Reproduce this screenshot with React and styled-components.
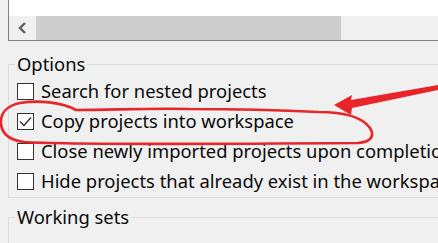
import React from "react";
import styled, { createGlobalStyle } from "styled-components";

const GlobalStyle = createGlobalStyle`
  html, body {
    margin: 0;
    padding: 0;
    background: #f0f0f0;
    overflow: hidden;
  }
`;

const Page = styled.div`
  position: relative;
  width: 438px;
  height: 243px;
  overflow: hidden;
  background: #f0f0f0;
  font-family: "Noto Sans", "Open Sans", sans-serif;
  font-size: 18.4px;
  color: #0a0a0a;
`;

const ListBox = styled.div`
  margin-left: 8px;
  width: 470px;
  height: 41px;
  padding-top: 16px;
  box-sizing: border-box;
  background: #fff;
  border-left: 1px solid #828282;
  border-bottom: 1px solid #828282;
`;

const HScroll = styled.div`
  display: flex;
  height: 24px;
  background: #f0f0f0;
`;

const ArrowButton = styled.div`
  width: 27px;
  display: flex;
  align-items: center;
  justify-content: center;
`;

const Thumb = styled.div`
  width: 305px;
  background: #cdcdcd;
`;

const Group = styled.fieldset`
  margin: ${(p) => p.$top}px 0 0 8px;
  width: 470px;
  padding: 0 8px 1px;
  border: 1px solid #dcdcdc;
  border-right: none;
  min-height: ${(p) => p.$minHeight || 0}px;
  box-sizing: border-box;
`;

const Legend = styled.legend`
  padding: 0 2px;
  margin-left: -2px;
  font-size: 18.4px;
  line-height: 24px;
  color: #0a0a0a;
`;

const Row = styled.label`
  display: flex;
  align-items: center;
  gap: 7px;
  height: 30px;
  white-space: nowrap;
  line-height: 24px;
`;

const Box = styled.span`
  flex: none;
  width: 17px;
  height: 17px;
  box-sizing: border-box;
  border: 1px solid #333;
  background: #fff;
  display: flex;
  align-items: center;
  justify-content: center;
`;

const Marks = styled.svg`
  position: absolute;
  left: 0;
  top: 0;
  pointer-events: none;
`;

const Checkbox = ({ checked, children }) => (
  <Row>
    <Box>
      {checked && (
        <svg width="15" height="15" viewBox="0 0 15 15">
          <path d="M2 7.5 L6 11.5 L13 3.5" fill="none" stroke="#333" strokeWidth="1.4" />
        </svg>
      )}
    </Box>
    <span>{children}</span>
  </Row>
);

const options = [
  { label: "Search for nested projects", checked: false },
  { label: "Copy projects into workspace", checked: true },
  { label: "Close newly imported projects upon completion", checked: false },
  { label: "Hide projects that already exist in the workspace", checked: false },
];

export default function App() {
  return (
    <Page>
      <GlobalStyle />
      <ListBox>
        <HScroll>
          <ArrowButton>
            <svg width="9" height="12" viewBox="0 0 9 12">
              <polyline points="7,1 2,6 7,11" fill="none" stroke="#606060" strokeWidth="2.4" />
            </svg>
          </ArrowButton>
          <Thumb />
        </HScroll>
      </ListBox>

      <Group $top={11}>
        <Legend>Options</Legend>
        {options.map((o) => (
          <Checkbox key={o.label} checked={o.checked}>
            {o.label}
          </Checkbox>
        ))}
      </Group>

      <Group $top={7} $minHeight={60}>
        <Legend>Working sets</Legend>
      </Group>

      <Marks width="438" height="243" viewBox="0 0 438 243">
        <path
          d="M76 110 C62 102 38 100 20 103 C6 106 0 114 1 124 C2 134 9 140 24 142 C70 145 220 144 358 143 C371 142 375 136 370 128 C363 118 346 112 318 112 C280 110 240 109 190 109 C150 108 112 110 76 110"
          fill="none"
          stroke="#e8262a"
          strokeWidth="2.6"
          strokeLinecap="round"
        />
        <polygon
          points="334,105 352,95 351,100 438,85 438,90 352,108 351,115"
          fill="#e8262a"
        />
      </Marks>
    </Page>
  );
}
